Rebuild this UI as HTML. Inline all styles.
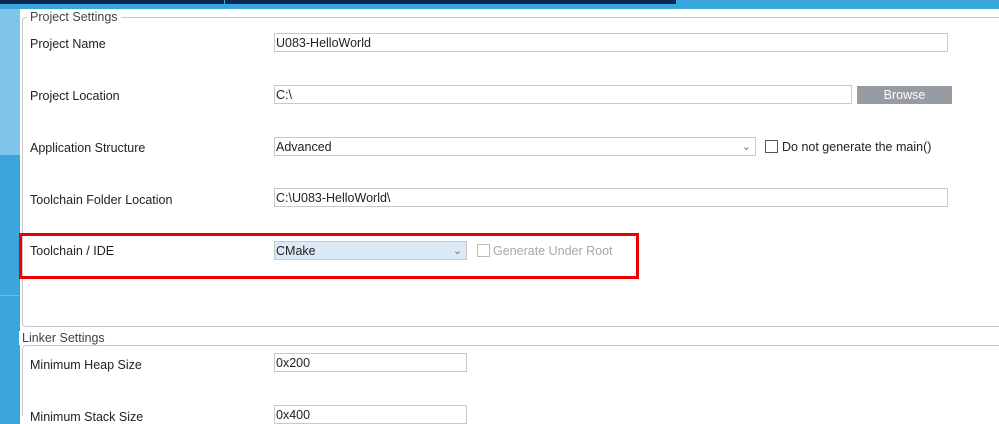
<!DOCTYPE html>
<html style="overflow:hidden;width:999px;height:424px"><head><style>
body{margin:0;width:999px;height:424px;overflow:hidden;background:#fff;position:relative;font-family:"Liberation Sans",sans-serif;font-size:12.5px;color:#222}
.a{position:absolute}
.in{position:absolute;border:1px solid #c8c8c8;height:17px;box-sizing:content-box;line-height:19px;padding-left:1px;background:#fff}
.lb{position:absolute;left:30px}
</style></head><body>
<div class="a" style="left:0;top:0;width:999px;height:9px;background:#3aa6dc"></div>
<div class="a" style="left:0;top:0;width:224px;height:4px;background:#0b2a52"></div>
<div class="a" style="left:225px;top:0;width:451px;height:4px;background:#0b2a52"></div>
<div class="a" style="left:0;top:9px;width:20px;height:146px;background:#7fc5e9"></div>
<div class="a" style="left:0;top:155px;width:20px;height:269px;background:#3aa6dc"></div>
<div class="a" style="left:0;top:295px;width:20px;height:1px;background:#6fbde6"></div>
<div class="a" style="left:22px;top:17px;width:990px;height:308px;border:1px solid #c8c8c8;border-radius:4px"></div>
<div class="a" style="left:27px;top:10px;background:#fff;padding:0 3px;color:#444">Project Settings</div>
<div class="a" style="left:22px;top:345px;width:990px;height:70px;border-left:1px solid #c8c8c8;border-top:1px solid #c8c8c8;border-top-left-radius:4px"></div>
<div class="a" style="left:19px;top:331px;background:#fff;padding:0 3px;color:#444">Linker Settings</div>
<div class="lb" style="top:37px">Project Name</div>
<div class="in" style="left:274px;top:33px;width:671px">U083-HelloWorld</div>
<div class="lb" style="top:89px">Project Location</div>
<div class="in" style="left:274px;top:85px;width:575px">C:\</div>
<div class="a" style="left:857px;top:86px;width:95px;height:18px;background:#979ca2;color:#fff;text-align:center;line-height:19px">Browse</div>
<div class="lb" style="top:141px">Application Structure</div>
<div class="in" style="left:274px;top:137px;width:479px">Advanced<span style="position:absolute;right:4px;color:#777;font-size:11px">&#8964;</span></div>
<div class="a" style="left:765px;top:140px;width:11px;height:11px;border:1px solid #555"></div>
<div class="a" style="left:782px;top:140px">Do not generate the main()</div>
<div class="lb" style="top:193px">Toolchain Folder Location</div>
<div class="in" style="left:274px;top:188px;width:671px">C:\U083-HelloWorld\</div>
<div class="a" style="left:19px;top:233px;width:614px;height:40px;border:3px solid #ee0000"></div>
<div class="lb" style="top:244px">Toolchain / IDE</div>
<div class="in" style="left:274px;top:241px;width:190px;background:#dce9f6">CMake<span style="position:absolute;right:4px;color:#777;font-size:11px">&#8964;</span></div>
<div class="a" style="left:477px;top:244px;width:11px;height:11px;border:1px solid #bbb"></div>
<div class="a" style="left:493px;top:244px;color:#a8a8a8">Generate Under Root</div>
<div class="lb" style="top:358px">Minimum Heap Size</div>
<div class="in" style="left:274px;top:353px;width:190px">0x200</div>
<div class="lb" style="top:410px">Minimum Stack Size</div>
<div class="in" style="left:274px;top:405px;width:190px">0x400</div>
</body></html>
